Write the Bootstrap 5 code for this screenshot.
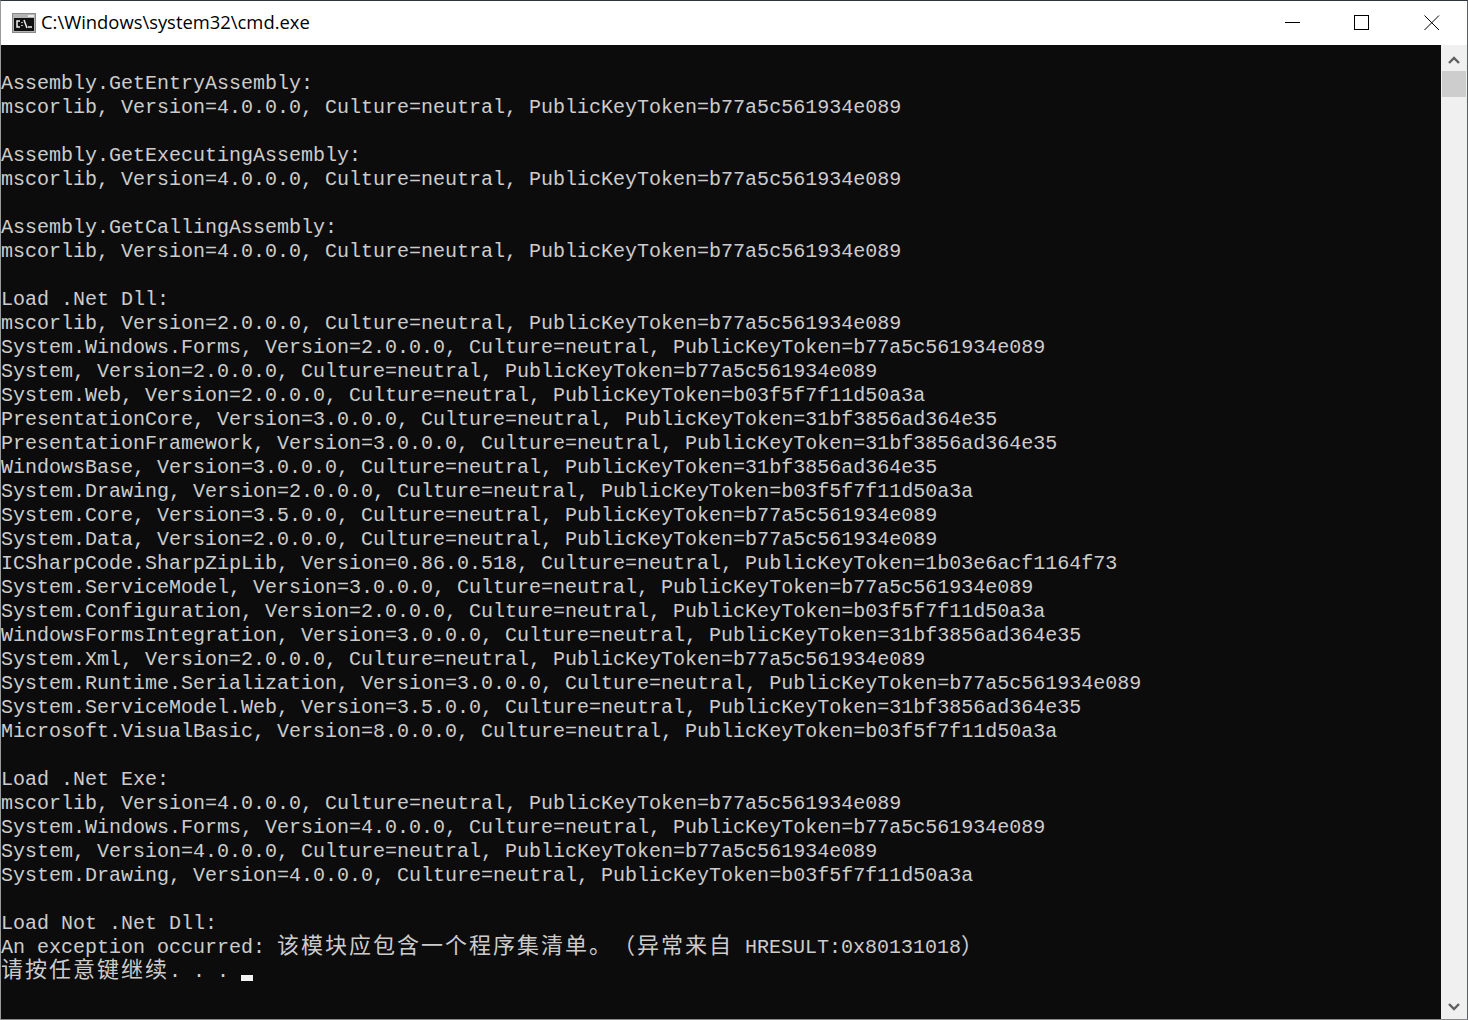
<!DOCTYPE html>
<html lang="zh">
<head>
<meta charset="utf-8">
<title>cmd.exe</title>
<link href="https://cdn.jsdelivr.net/npm/bootstrap@5.3.0/dist/css/bootstrap.min.css" rel="stylesheet">
<style>
html,body{height:100%;margin:0;background:#0c0c0c;overflow:hidden}
.cmd-window{height:1020px;width:1468px;border:1px solid #3a3f47;border-right-color:#5a5f66;border-bottom-color:#8a8a8a;border-left-color:#9a9a9a;border-top-color:#2f3640}
.cmd-title{height:44px;background:#fff;color:#000;font-family:"Open Sans","Noto Sans",sans-serif;font-size:18.4px;line-height:42px}
.cmd-icon{width:24px;height:20px;margin-left:11px;margin-right:5px;flex:none}
.cmd-caption{white-space:nowrap;height:44px}
.cmd-ctrl{width:70px;height:44px;flex:none}
.cmd-ctrl-min{width:68px}
.cmd-body{background:#0c0c0c;min-height:0}
.cmd-text{padding:3px 0 0;color:#ccc;font-family:"Liberation Mono","Noto Sans CJK SC",monospace;font-size:20px;line-height:24px;overflow:hidden;font-weight:400}
.cmd-line{height:24px;white-space:pre}
.cmd-cjk{display:inline-block;vertical-align:top;height:24px;font-family:"Noto Sans CJK SC",sans-serif;font-size:22px;letter-spacing:2px;line-height:14px;text-spacing-trim:space-all;font-feature-settings:"palt" 0,"chws" 0}
.cmd-cursor{display:inline-block;width:12px;height:6px;background:#f2f2f2;vertical-align:-4px}
.cmd-scroll{width:26px;background:#f0f0f0}
.cmd-arrow{height:26px}
.cmd-arrow-up{padding-top:3px}
.cmd-arrow-down{padding-top:2px}
.cmd-thumb{height:26px;background:#cdcdcd;margin:0 1px}
</style>
</head>
<body>
<div class="cmd-window d-flex flex-column">
  <div class="cmd-title d-flex align-items-center">
    <svg class="cmd-icon" viewBox="0 0 24 20" aria-hidden="true"><rect width="24" height="20" fill="#8a8a8a"/><rect x="1" y="1" width="22" height="18" fill="#b5b5b5"/><rect x="2" y="5" width="20" height="13" fill="#111"/><rect x="16" y="2" width="6" height="2" fill="#e8e8e8"/><path d="M8 8H5v6h3M10 9v1M10 12v1M12 7l3 8M16 14h4" fill="none" stroke="#eee" stroke-width="1.5"/></svg>
    <span class="cmd-caption flex-grow-1">C:\Windows\system32\cmd.exe</span>
    <div class="cmd-ctrl cmd-ctrl-min d-flex align-items-center justify-content-center"><svg width="16" height="16" viewBox="0 0 16 16" aria-hidden="true"><path d="M0 7.5h15" stroke="#000"/></svg></div>
    <div class="cmd-ctrl d-flex align-items-center justify-content-center"><svg width="16" height="16" viewBox="0 0 16 16" aria-hidden="true"><rect x=".5" y=".5" width="14" height="14" fill="none" stroke="#000"/></svg></div>
    <div class="cmd-ctrl d-flex align-items-center justify-content-center"><svg width="16" height="16" viewBox="0 0 16 16" aria-hidden="true"><path d="M.5.5l14.5 14.5M15 .5L.5 15" stroke="#000"/></svg></div>
  </div>
  <div class="cmd-body d-flex flex-grow-1">
    <div class="cmd-text flex-grow-1">
<div class="cmd-line"></div>
<div class="cmd-line">Assembly.GetEntryAssembly:</div>
<div class="cmd-line">mscorlib, Version=4.0.0.0, Culture=neutral, PublicKeyToken=b77a5c561934e089</div>
<div class="cmd-line"></div>
<div class="cmd-line">Assembly.GetExecutingAssembly:</div>
<div class="cmd-line">mscorlib, Version=4.0.0.0, Culture=neutral, PublicKeyToken=b77a5c561934e089</div>
<div class="cmd-line"></div>
<div class="cmd-line">Assembly.GetCallingAssembly:</div>
<div class="cmd-line">mscorlib, Version=4.0.0.0, Culture=neutral, PublicKeyToken=b77a5c561934e089</div>
<div class="cmd-line"></div>
<div class="cmd-line">Load .Net Dll:</div>
<div class="cmd-line">mscorlib, Version=2.0.0.0, Culture=neutral, PublicKeyToken=b77a5c561934e089</div>
<div class="cmd-line">System.Windows.Forms, Version=2.0.0.0, Culture=neutral, PublicKeyToken=b77a5c561934e089</div>
<div class="cmd-line">System, Version=2.0.0.0, Culture=neutral, PublicKeyToken=b77a5c561934e089</div>
<div class="cmd-line">System.Web, Version=2.0.0.0, Culture=neutral, PublicKeyToken=b03f5f7f11d50a3a</div>
<div class="cmd-line">PresentationCore, Version=3.0.0.0, Culture=neutral, PublicKeyToken=31bf3856ad364e35</div>
<div class="cmd-line">PresentationFramework, Version=3.0.0.0, Culture=neutral, PublicKeyToken=31bf3856ad364e35</div>
<div class="cmd-line">WindowsBase, Version=3.0.0.0, Culture=neutral, PublicKeyToken=31bf3856ad364e35</div>
<div class="cmd-line">System.Drawing, Version=2.0.0.0, Culture=neutral, PublicKeyToken=b03f5f7f11d50a3a</div>
<div class="cmd-line">System.Core, Version=3.5.0.0, Culture=neutral, PublicKeyToken=b77a5c561934e089</div>
<div class="cmd-line">System.Data, Version=2.0.0.0, Culture=neutral, PublicKeyToken=b77a5c561934e089</div>
<div class="cmd-line">ICSharpCode.SharpZipLib, Version=0.86.0.518, Culture=neutral, PublicKeyToken=1b03e6acf1164f73</div>
<div class="cmd-line">System.ServiceModel, Version=3.0.0.0, Culture=neutral, PublicKeyToken=b77a5c561934e089</div>
<div class="cmd-line">System.Configuration, Version=2.0.0.0, Culture=neutral, PublicKeyToken=b03f5f7f11d50a3a</div>
<div class="cmd-line">WindowsFormsIntegration, Version=3.0.0.0, Culture=neutral, PublicKeyToken=31bf3856ad364e35</div>
<div class="cmd-line">System.Xml, Version=2.0.0.0, Culture=neutral, PublicKeyToken=b77a5c561934e089</div>
<div class="cmd-line">System.Runtime.Serialization, Version=3.0.0.0, Culture=neutral, PublicKeyToken=b77a5c561934e089</div>
<div class="cmd-line">System.ServiceModel.Web, Version=3.5.0.0, Culture=neutral, PublicKeyToken=31bf3856ad364e35</div>
<div class="cmd-line">Microsoft.VisualBasic, Version=8.0.0.0, Culture=neutral, PublicKeyToken=b03f5f7f11d50a3a</div>
<div class="cmd-line"></div>
<div class="cmd-line">Load .Net Exe:</div>
<div class="cmd-line">mscorlib, Version=4.0.0.0, Culture=neutral, PublicKeyToken=b77a5c561934e089</div>
<div class="cmd-line">System.Windows.Forms, Version=4.0.0.0, Culture=neutral, PublicKeyToken=b77a5c561934e089</div>
<div class="cmd-line">System, Version=4.0.0.0, Culture=neutral, PublicKeyToken=b77a5c561934e089</div>
<div class="cmd-line">System.Drawing, Version=4.0.0.0, Culture=neutral, PublicKeyToken=b03f5f7f11d50a3a</div>
<div class="cmd-line"></div>
<div class="cmd-line">Load Not .Net Dll:</div>
<div class="cmd-line">An exception occurred: <span class="cmd-cjk">该模块应包含一个程序集清单。（异常来自</span> HRESULT:0x80131018<span class="cmd-cjk">）</span></div>
<div class="cmd-line"><span class="cmd-cjk">请按任意键继续</span>. . . <span class="cmd-cursor"></span></div>
    </div>
    <div class="cmd-scroll d-flex flex-column flex-shrink-0">
      <div class="cmd-arrow cmd-arrow-up d-flex align-items-center justify-content-center"><svg width="12" height="8" viewBox="0 0 12 8" aria-hidden="true"><path d="M1 7l5-5 5 5" fill="none" stroke="#606060" stroke-width="2.4"/></svg></div>
      <div class="cmd-thumb"></div>
      <div class="flex-grow-1"></div>
      <div class="cmd-arrow cmd-arrow-down d-flex align-items-center justify-content-center"><svg width="12" height="8" viewBox="0 0 12 8" aria-hidden="true"><path d="M1 1l5 5 5-5" fill="none" stroke="#606060" stroke-width="2.4"/></svg></div>
    </div>
  </div>
</div>
<script src="https://cdn.jsdelivr.net/npm/bootstrap@5.3.0/dist/js/bootstrap.bundle.min.js"></script>
</body>
</html>
